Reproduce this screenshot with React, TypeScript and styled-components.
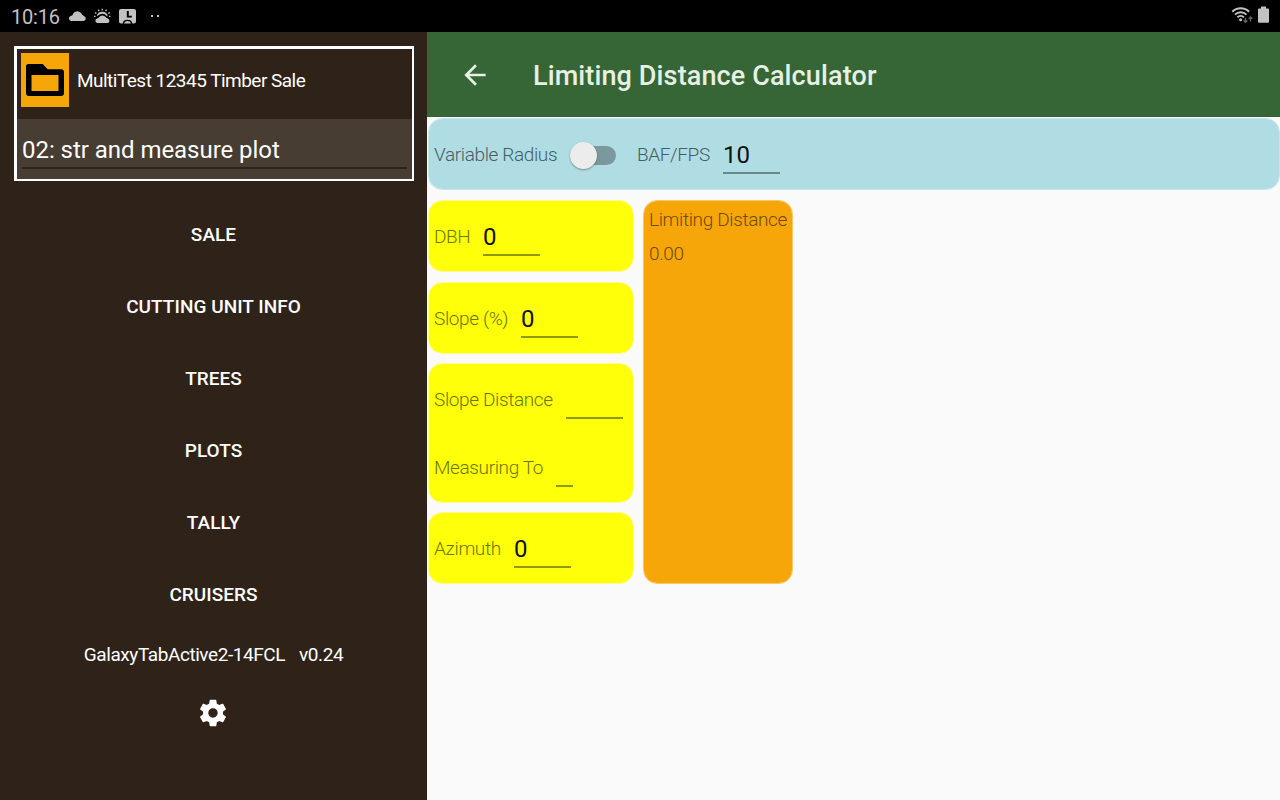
import React from "react";
import styled, { createGlobalStyle } from "styled-components";

const GlobalStyle = createGlobalStyle`
  * { box-sizing: border-box; }
  body { margin: 0; background: #fafafa; font-family: Roboto, sans-serif; }
`;

const Screen = styled.div`
  width: 1280px;
  height: 800px;
  display: flex;
  flex-direction: column;
  overflow: hidden;
`;

const StatusBar = styled.header`
  height: 32px;
  flex: none;
  display: flex;
  align-items: center;
  justify-content: space-between;
  padding: 0 10px 0 11px;
  background: #000;
  color: #c2c2c2;
`;

const StatusGroup = styled.div`
  display: flex;
  align-items: center;
  height: 32px;
`;

const Clock = styled.span`
  width: 57px;
  font-size: 20px;
  letter-spacing: -0.2px;
  line-height: 32px;
  white-space: nowrap;
  padding-top: 2px;
`;

const Body = styled.div`
  flex: 1;
  display: flex;
  min-height: 0;
`;

const Sidebar = styled.nav`
  width: 427px;
  flex: none;
  display: flex;
  flex-direction: column;
  align-items: center;
  padding: 14px 13px 0;
  background: #2f2319;
  color: #fff;
`;

const SaleBox = styled.section`
  width: 400px;
  height: 135px;
  flex: none;
  margin-left: 1px;
  align-self: flex-start;
  display: flex;
  flex-direction: column;
  border: solid #fff;
  border-width: 3px 2px 2px 3px;
`;

const SaleHeader = styled.div`
  height: 70px;
  display: flex;
  align-items: flex-start;
  gap: 8px;
  padding: 4px;
`;

const FolderTile = styled.div`
  width: 48px;
  height: 54px;
  display: flex;
  align-items: center;
  justify-content: center;
  background: #f7a60a;
`;

const SaleName = styled.span`
  font-size: 19px;
  letter-spacing: -0.52px;
  line-height: 56px;
  white-space: nowrap;
`;

const UnitPicker = styled.div`
  flex: 1;
  padding: 14px 5px 0;
  background: #483d33;
`;

const UnitName = styled.div`
  height: 36px;
  font-size: 24px;
  letter-spacing: -0.04px;
  line-height: 34px;
  border-bottom: 2px solid #2f2319;
  white-space: nowrap;
`;

const Menu = styled.div`
  display: flex;
  flex-direction: column;
  align-items: center;
  padding-top: 18px;
`;

const MenuItem = styled.a`
  height: 72px;
  font-size: 19px;
  font-weight: 500;
  letter-spacing: 0.04px;
  line-height: 72px;
`;

const Version = styled.div`
  display: flex;
  gap: 14px;
  font-size: 19px;
  letter-spacing: -0.43px;
  line-height: 48px;
  white-space: nowrap;
`;

const GearButton = styled.div`
  height: 68px;
  margin-right: 1px;
  display: flex;
  align-items: center;
`;

const Main = styled.main`
  flex: 1;
  min-width: 0;
  background: #fafafa;
`;

const AppBar = styled.div`
  height: 85px;
  display: flex;
  align-items: center;
  gap: 42px;
  padding: 1px 0 0 32px;
  background: #366635;
  color: #e6f0e4;
`;

const Title = styled.h1`
  margin: 0;
  font-size: 27px;
  font-weight: 500;
  letter-spacing: 0.12px;
  line-height: 40px;
  padding-top: 1px;
`;

const Content = styled.div`
  padding: 1px 0 0 1px;
`;

const Panel = styled.div<{ $tone: string; $edge: string }>`
  border: 1px solid ${(p) => p.$edge};
  border-radius: 14px;
  background: ${(p) => p.$tone};
  background-clip: padding-box;
  padding: 2px 5px 0;
`;

const Columns = styled.div`
  display: flex;
  align-items: flex-start;
  gap: 9px;
  margin-top: 10.4px;
`;

const InputColumn = styled.div`
  width: 206px;
  display: flex;
  flex-direction: column;
  gap: 9.3px;
`;

const ResultPanel = styled(Panel)`
  width: 150px;
  height: 383.6px;
  padding-top: 8px;
`;

const Row = styled.div`
  height: 68px;
  display: flex;
  align-items: center;
`;

const Label = styled.label<{ $color: string; $width?: number }>`
  width: ${(p) => (p.$width ? `${p.$width}px` : "auto")};
  color: ${(p) => p.$color};
  font-size: 19px;
  font-weight: 300;
  letter-spacing: -0.37px;
  line-height: 34px;
  white-space: nowrap;
`;

const Field = styled.div<{ $line: string; $width?: number }>`
  width: ${(p) => p.$width ?? 57}px;
  height: 38px;
  border-bottom: 2px solid ${(p) => p.$line};
  color: #111;
  font-size: 24px;
  line-height: 38px;
`;

const Toggle = styled.div`
  width: 46px;
  height: 28px;
  margin-right: 21px;
  display: flex;
  align-items: center;
  isolation: isolate;
`;

const Knob = styled.span`
  width: 27px;
  height: 27px;
  flex: none;
  border-radius: 50%;
  background: #ececec;
  box-shadow: 0 1px 2px rgba(0, 0, 0, 0.35);
  z-index: 1;
`;

const Track = styled.span`
  width: 33px;
  height: 19px;
  margin-left: -14px;
  border-radius: 10px;
  background: #7b999d;
`;

const Result = styled.div`
  color: #704a04;
  font-size: 19px;
  font-weight: 300;
  letter-spacing: -0.36px;
  line-height: 22px;
  margin-bottom: 12px;
  white-space: nowrap;
`;

const YELLOW = "#ffff0a";
const OLIVE = "#6a7800";

type Entry = { label: string; value: string; labelWidth: number; width?: number };

const groups: Entry[][] = [
  [{ label: "DBH", value: "0", labelWidth: 49 }],
  [{ label: "Slope (%)", value: "0", labelWidth: 87 }],
  [
    { label: "Slope Distance", value: "", labelWidth: 132 },
    { label: "Measuring To", value: "", labelWidth: 122, width: 17 },
  ],
  [{ label: "Azimuth", value: "0", labelWidth: 80 }],
];

const menu = ["SALE", "CUTTING UNIT INFO", "TREES", "PLOTS", "TALLY", "CRUISERS"];

function NotificationIcons() {
  return (
    <svg width="96" height="32" viewBox="68 0 96 32" fill="#c2c2c2">
      <path d="M71.300 21a2.500 2.500 0 0 1-.6-4.900q1.500-.3 2.300-1.800a4.700 4.700 0 0 1 8-1.200q1.200 2 2.900 3a2.500 2.500 0 0 1-.3 4.900z" />
      <path d="M97.300 23a2.300 2.300 0 0 1-.2-4.500q1.200-.2 2-1.300a4 4 0 0 1 6.500-.2q.9 1.300 2.300 1.600a2.300 2.300 0 0 1-.3 4.400z" />
      <path d="M96.700 16.200a5.700 5.700 0 0 1 11.200.4l-1.500-.8a5.200 5.200 0 0 0-7.900-.6z" />
      <path
        d="M102.300 8.700v1.700M98.200 9.700l.9 1.400M106.500 9.700l-.9 1.400M94.900 12.500l1.500.9M109.800 12.500l-1.500.9M94 16.300h1.500M110.500 16.300h-1.500"
        stroke="#c2c2c2"
        strokeWidth="1.3"
      />
      <path
        fillRule="evenodd"
        d="M121 9h13q2 0 2 2v10.500q0 2-2 2h-1.600c-.6-2.700-2.200-3.700-4.900-3.700s-4.300 1-4.900 3.700H121q-2 0-2-2V11q0-2 2-2zm5.800 2v6.600h5v-1.900h-3V11z"
      />
      <path d="M124 23.500q.7-2.400 3.500-2.400t3.500 2.400z" />
      <rect x="151" y="15" width="2" height="2" />
      <rect x="157" y="15" width="2" height="2" />
    </svg>
  );
}

function SystemIcons() {
  return (
    <svg width="40" height="32" viewBox="1230 0 40 32" fill="none" stroke="#c2c2c2">
      <path d="M1232.300 11.700a12 12 0 0 1 16.800 0" strokeWidth="1.900" />
      <path d="M1234.900 14.600a8.300 8.300 0 0 1 11.600 0" strokeWidth="1.900" />
      <path d="M1237.400 17.300a4.800 4.800 0 0 1 6.500 0" strokeWidth="1.900" />
      <circle cx="1240.600" cy="19.700" r="1.500" fill="#c2c2c2" stroke="none" />
      <path
        d="M1245.500 17.800v4.500m-1.800-1.800l1.800 1.900 1.800-1.900M1250.500 21.500V17m-1.800 1.900l1.800-1.900 1.800 1.900"
        stroke="#666"
        strokeWidth="1.300"
      />
      <path d="M1261 6.500h5v2h2q1 0 1 1v12.300q0 1-1 1h-9q-1 0-1-1V9.500q0-1 1-1h2z" fill="#c2c2c2" stroke="none" />
    </svg>
  );
}

export default function App() {
  return (
    <Screen>
      <GlobalStyle />
      <StatusBar>
        <StatusGroup>
          <Clock>10:16</Clock>
          <NotificationIcons />
        </StatusGroup>
        <StatusGroup>
          <SystemIcons />
        </StatusGroup>
      </StatusBar>
      <Body>
        <Sidebar>
          <SaleBox>
            <SaleHeader>
              <FolderTile>
                <svg width="38" height="32" viewBox="0 0 38 32">
                  <path
                    fillRule="evenodd"
                    d="M2.500 0h14.200l5 5.300H35q3 0 3 3V29q0 3-3 3H3q-3 0-3-3V2.800Q0 0 2.500 0zM5.500 11v16h27V11z"
                  />
                </svg>
              </FolderTile>
              <SaleName>MultiTest 12345 Timber Sale</SaleName>
            </SaleHeader>
            <UnitPicker>
              <UnitName>02: str and measure plot</UnitName>
            </UnitPicker>
          </SaleBox>
          <Menu>
            {menu.map((item) => (
              <MenuItem key={item}>{item}</MenuItem>
            ))}
          </Menu>
          <Version>
            <span>GalaxyTabActive2-14FCL</span>
            <span>v0.24</span>
          </Version>
          <GearButton>
            <svg width="32" height="32" viewBox="0 0 24 24" fill="#fff">
              <path d="M19.430 12.980c.04-.32.07-.64.07-.98s-.03-.66-.07-.98l2.110-1.650c.19-.15.24-.42.12-.64l-2-3.460c-.12-.22-.39-.3-.61-.22l-2.490 1c-.52-.4-1.080-.73-1.690-.98l-.38-2.650C14.460 2.180 14.250 2 14 2h-4c-.25 0-.46.18-.49.42l-.38 2.650c-.61.25-1.170.59-1.690.98l-2.490-1c-.23-.09-.49 0-.61.22l-2 3.460c-.13.22-.07.49.12.64l2.110 1.650c-.04.32-.07.65-.07.98s.03.66.07.98l-2.110 1.650c-.19.15-.24.42-.12.64l2 3.460c.12.22.39.3.61.22l2.490-1c.52.4 1.080.73 1.690.98l.38 2.650c.03.24.24.42.49.42h4c.25 0 .46-.18.49-.42l.38-2.650c.61-.25 1.170-.59 1.690-.98l2.490 1c.23.09.49 0 .61-.22l2-3.460c.12-.22.07-.49-.12-.64l-2.110-1.650zM12 15.500c-1.930 0-3.500-1.570-3.500-3.500s1.570-3.500 3.500-3.500 3.500 1.570 3.500 3.500-1.570 3.500-3.500 3.500z" />
            </svg>
          </GearButton>
        </Sidebar>
        <Main>
          <AppBar>
            <svg width="32" height="32" viewBox="0 0 24 24" fill="currentColor">
              <path d="M20 11H7.830l5.590-5.590L12 4l-8 8 8 8 1.410-1.410L7.830 13H20v-2z" />
            </svg>
            <Title>Limiting Distance Calculator</Title>
          </AppBar>
          <Content>
            <Panel $tone="#b0dce4" $edge="#c9e6eb">
              <Row>
                <Label $color="#465e62" $width={136}>Variable Radius</Label>
                <Toggle>
                  <Knob />
                  <Track />
                </Toggle>
                <Label $color="#465e62" $width={86}>BAF/FPS</Label>
                <Field $line="#6b878c">10</Field>
              </Row>
            </Panel>
            <Columns>
              <InputColumn>
                {groups.map((rows) => (
                  <Panel key={rows[0].label} $tone={YELLOW} $edge="#fdfd90">
                    {rows.map((r) => (
                      <Row key={r.label}>
                        <Label $color={OLIVE} $width={r.labelWidth}>{r.label}</Label>
                        <Field $line="#8d9a06" $width={r.width}>{r.value}</Field>
                      </Row>
                    ))}
                  </Panel>
                ))}
              </InputColumn>
              <ResultPanel $tone="#f7a60a" $edge="#f9c866">
                <Result>Limiting Distance</Result>
                <Result>0.00</Result>
              </ResultPanel>
            </Columns>
          </Content>
        </Main>
      </Body>
    </Screen>
  );
}
